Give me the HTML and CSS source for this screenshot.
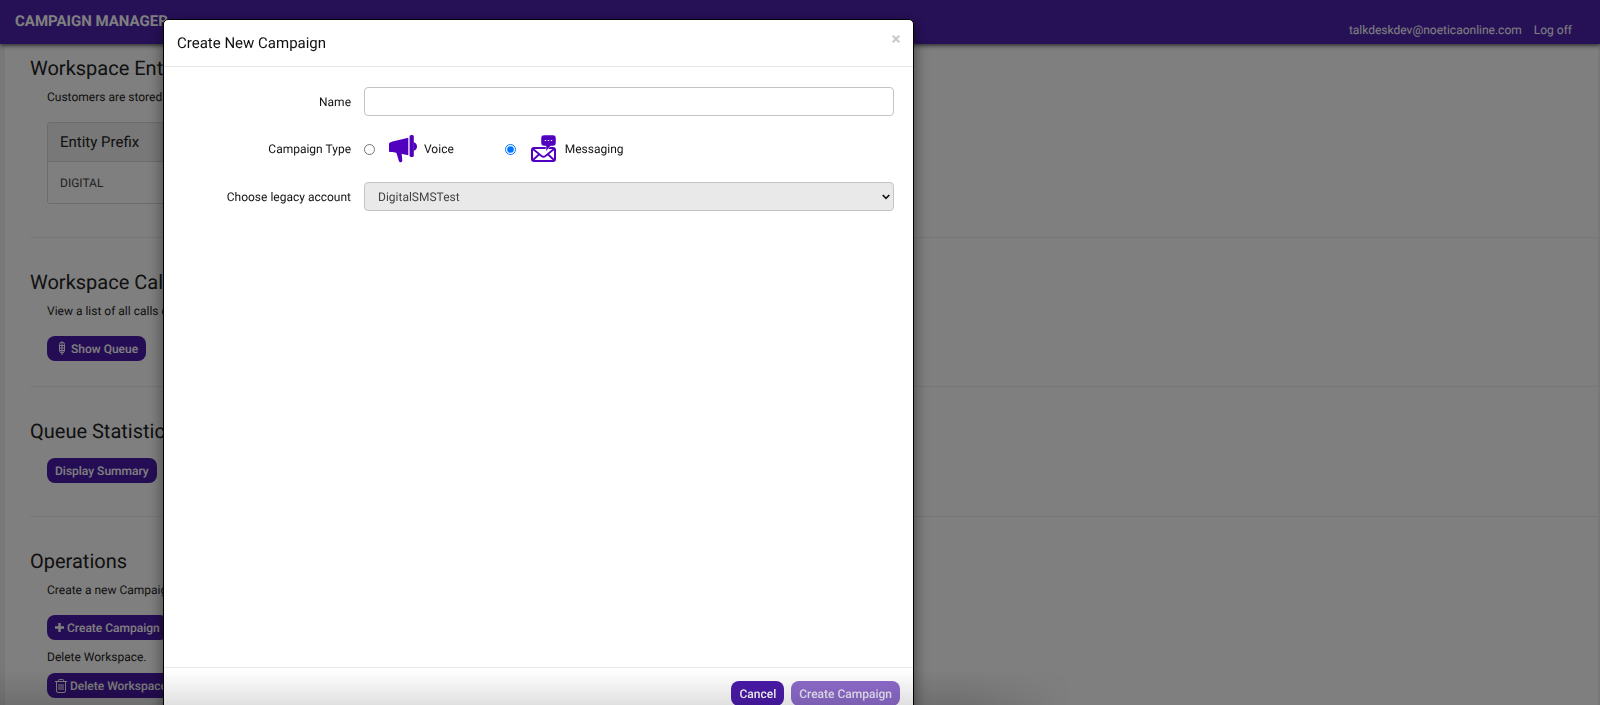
FILE: index.html
```html
<!DOCTYPE html>
<html lang="en">
<head>
    <meta charset="UTF-8">
    <meta name="viewport" content="width=device-width, initial-scale=1.0">
    <title>Campaign Manager</title>
    <link rel="stylesheet" href="styles.css">
</head>
<body>
    <header class="navbar">
        <a class="brand" href="#">CAMPAIGN MANAGER</a>
        <nav class="user-nav">
            <a href="#">talkdeskdev@noeticaonline.com</a>
            <a href="#">Log off</a>
        </nav>
    </header>

    <main class="page">
        <section class="section">
            <h2>Workspace Entities</h2>
            <p>Customers are stored in entities.</p>
            <table class="entity-table">
                <thead>
                    <tr><th>Entity Prefix</th></tr>
                </thead>
                <tbody>
                    <tr><td>DIGITAL</td></tr>
                </tbody>
            </table>
        </section>

        <section class="section section-short">
            <h2>Workspace Call Queue</h2>
            <p>View a list of all calls queued.</p>
            <button class="button" type="button">
                <svg class="icon-queue" width="18" height="15" viewBox="0 0 18 15" fill="none" stroke="currentColor" aria-hidden="true">
                    <path d="M4.5 3.5a2.5 2.5 0 0 1 5 0v6a2.5 2.5 0 0 1-5 0zM4.5 4.500h5M4.500 7h5M4.500 9.500h5M7 1v13"/>
                </svg>Show Queue
            </button>
        </section>

        <section class="section">
            <h2>Queue Statistics</h2>
            <button class="button button-summary" type="button">Display Summary</button>
        </section>

        <section class="section">
            <h2>Operations</h2>
            <p>Create a new Campaign.</p>
            <button class="button" type="button">
                <svg width="9" height="9" viewBox="0 0 9 9" fill="currentColor" aria-hidden="true">
                    <path d="M3.300 0h2.400v3.300H9v2.400H5.700V9H3.300V5.700H0V3.300h3.300z"/>
                </svg>Create Campaign
            </button>
            <p class="after-button">Delete Workspace.</p>
            <button class="button" type="button">
                <svg width="12" height="14" viewBox="0 0 12 14" fill="none" stroke="currentColor" aria-hidden="true">
                    <path d="M0 2.500h12M3.500 2.500V1.300q0-.8.8-.8h3.400q.8 0 .8.800v1.200M1.500 2.500v9.500q0 1.500 1.500 1.500h6q1.500 0 1.500-1.500V2.500M4 5v6M6 5v6M8 5v6"/>
                </svg>Delete Workspace
            </button>
        </section>
    </main>

    <div class="modal-backdrop">
        <form class="modal" role="dialog" aria-labelledby="modal-title">
            <div class="modal-header">
                <h1 id="modal-title">Create New Campaign</h1>
                <button class="close" type="button" aria-label="Close">
                    <svg width="8" height="8" viewBox="0 0 8 8" stroke="currentColor" stroke-width="2" aria-hidden="true">
                        <path d="M.7.700l6.600 6.600M7.300.700L.7 7.300"/>
                    </svg>
                </button>
            </div>

            <div class="modal-body">
                <div class="form-row">
                    <label for="name">Name</label>
                    <input type="text" id="name" class="input">
                </div>

                <div class="form-row">
                    <span class="form-label">Campaign Type</span>
                    <div class="types">
                        <label class="type">
                            <input type="radio" name="type" value="voice">
                            <svg width="28" height="28" viewBox="0 0 28 28" fill="#5000be" aria-hidden="true">
                                <path d="M0 9q0-1.200 1-1.600l2.500-1L19.300 2.800v17.400L3.500 17H1q-1 0-1-1z"/>
                                <path d="M7 16.500l5.500 1 .8 7.700q.1 1.800-1.500 2-1.600.2-2-1.500z"/>
                                <rect x="20.600" y="0" width="4.200" height="22" rx="1.500"/>
                                <path d="M24.500 7.300q3.500.7 3.500 4.200t-3.500 4.200z"/>
                            </svg>
                            Voice
                        </label>
                        <label class="type">
                            <input type="radio" name="type" value="messaging" checked>
                            <svg width="28" height="28" viewBox="0 0 28 28" aria-hidden="true">
                                <rect x="2" y="13" width="23" height="13" rx="2" fill="#fff" stroke="#5000be" stroke-width="2"/>
                                <path d="M3 14l8.500 7q2 1.500 4 0L24 14M3 25l6.500-6M24 25l-6.500-6" fill="none" stroke="#5000be" stroke-width="1.800"/>
                                <path d="M14 0h9q3 0 3 3v5q0 3-3 3h-2.500l-4.500 5.500V11H14q-3 0-3-3V3q0-3 3-3z" fill="#5000be" stroke="#fff" stroke-width=".5"/>
                                <path d="M14.800 5.500h1.400M17.800 5.500h1.400M20.800 5.500h1.400" stroke="#fff" stroke-width="1"/>
                            </svg>
                            Messaging
                        </label>
                    </div>
                </div>

                <div class="form-row">
                    <label for="account">Choose legacy account</label>
                    <div class="select-wrap">
                        <select id="account" class="input">
                            <option>DigitalSMSTest</option>
                        </select>
                        <svg class="chevron" width="8" height="6" viewBox="0 0 8 6" fill="none" stroke="#111" stroke-width="1.700" aria-hidden="true">
                            <path d="M.7 1L4 4.300 7.300 1"/>
                        </svg>
                    </div>
                </div>
            </div>

            <div class="modal-footer">
                <button class="button" type="button">Cancel</button>
                <button class="button" type="submit" disabled>Create Campaign</button>
            </div>
        </form>
    </div>
    <div class="bottom-shade"></div>
</body>
</html>
```
FILE: styles.css
```css
* {
    box-sizing: border-box;
}
body {
    margin: 0;
    height: 100vh;
    overflow: hidden;
    font-family: Roboto, sans-serif;
    font-size: 12px;
    line-height: 16px;
    text-rendering: geometricPrecision;
    color: #222;
    background-color: #eef0f5;
}
h1, h2, p {
    margin: 0;
    font-weight: normal;
}
.navbar {
    position: relative;
    display: flex;
    justify-content: space-between;
    height: 44px;
    padding: 0 28px 0 15px;
    background-color: #4d22af;
    box-shadow: 0 1px 5px rgba(0, 0, 0, 0.8);
}
.navbar a {
    color: #fff;
    text-decoration: none;
}
.brand {
    font-size: 15px;
    line-height: 42px;
    font-weight: bold;
}
.user-nav {
    display: flex;
    gap: 12px;
    padding-top: 22px;
}
.page {
    margin: 0 2px 0 5px;
    padding: 12px 0 0 25px;
    background-color: #fff;
}
.section {
    padding-bottom: 33px;
}
.section-short {
    padding-bottom: 25px;
}
.section + .section {
    padding-top: 32px;
    border-top: 1px solid #eee;
}
.section h2 {
    font-size: 20px;
    line-height: 25px;
}
.section p {
    margin: 8px 17px 17px;
}
.section p.after-button {
    margin: 9px 17px 8px;
}
.section .button {
    margin-left: 17px;
}
.section .button-summary {
    margin-top: 14px;
}
.entity-table {
    width: 500px;
    margin-left: 17px;
    border: 1px solid #d8d8d8;
    border-radius: 3px;
    border-spacing: 0;
    text-align: left;
}
.entity-table th {
    height: 39px;
    padding: 0 12px;
    border-bottom: 1px solid #d8d8d8;
    background-color: #f0f0f0;
    font-size: 15px;
    font-weight: normal;
}
.entity-table td {
    height: 41px;
    padding: 0 12px;
    color: #444;
}
.button {
    display: flex;
    align-items: center;
    gap: 3px;
    height: 25px;
    padding: 0 8px;
    border: none;
    border-radius: 8px;
    background-color: #4b1bab;
    color: #fff;
    font-family: inherit;
    font-size: 12px;
    font-weight: 500;
    text-rendering: inherit;
    cursor: pointer;
}
.button:disabled {
    background-color: #8e6ccc;
    color: #eee8f8;
    cursor: default;
}
.icon-queue {
    margin-right: -5px;
}
.modal-backdrop {
    position: fixed;
    inset: 0;
    padding: 19px 163px 0;
    background-color: rgba(0, 0, 0, 0.5);
}
.modal {
    display: flex;
    flex-direction: column;
    max-width: 751px;
    height: 100vh;
    border: 1px solid #000;
    border-radius: 5px;
    background-color: #fff;
    box-shadow: 0 5px 15px rgba(0, 0, 0, 0.5);
    color: #111;
}
.modal-header {
    display: flex;
    justify-content: space-between;
    align-items: center;
    height: 47px;
    padding: 0 13px;
    border-bottom: 1px solid #e8e8e8;
}
.modal-header h1 {
    font-size: 15px;
    line-height: 20px;
}
.close {
    display: flex;
    margin-bottom: 8px;
    padding: 0;
    border: none;
    background: none;
    color: #c8c8c8;
    cursor: pointer;
}
.modal-body {
    display: flex;
    flex-direction: column;
    gap: 19px;
    height: 600px;
    padding: 20px 19px 0 0;
}
.form-row {
    display: grid;
    grid-template-columns: 187px 1fr;
    column-gap: 13px;
    align-items: center;
    min-height: 28px;
}
.form-row > label,
.form-label {
    text-align: right;
}
.input {
    width: 100%;
    height: 29px;
    padding: 0 13px;
    border: 1px solid #c4c4c4;
    border-radius: 4px;
    background-color: #fff;
    font-family: inherit;
    font-size: 12px;
    text-rendering: inherit;
    color: #444;
}
.select-wrap {
    position: relative;
}
select.input {
    display: block;
    appearance: none;
    background-color: #e9e9e9;
}
.chevron {
    position: absolute;
    right: 4px;
    top: 12px;
    pointer-events: none;
}
.types {
    display: flex;
    gap: 51px;
}
.type {
    display: flex;
    align-items: center;
    gap: 7px;
}
.type input {
    width: 11px;
    height: 11px;
    margin: 0 7px 0 0;
}
.modal-footer {
    display: flex;
    justify-content: flex-end;
    gap: 7px;
    padding: 13px;
    border-top: 1px solid #e8e8e8;
}
.bottom-shade {
    position: fixed;
    left: 0;
    bottom: 0;
    width: 67%;
    height: 35px;
    background: linear-gradient(rgba(0, 0, 0, 0), rgba(0, 0, 0, 0.12));
    mask-image: linear-gradient(to right, #000 90%, transparent);
    pointer-events: none;
}
```
